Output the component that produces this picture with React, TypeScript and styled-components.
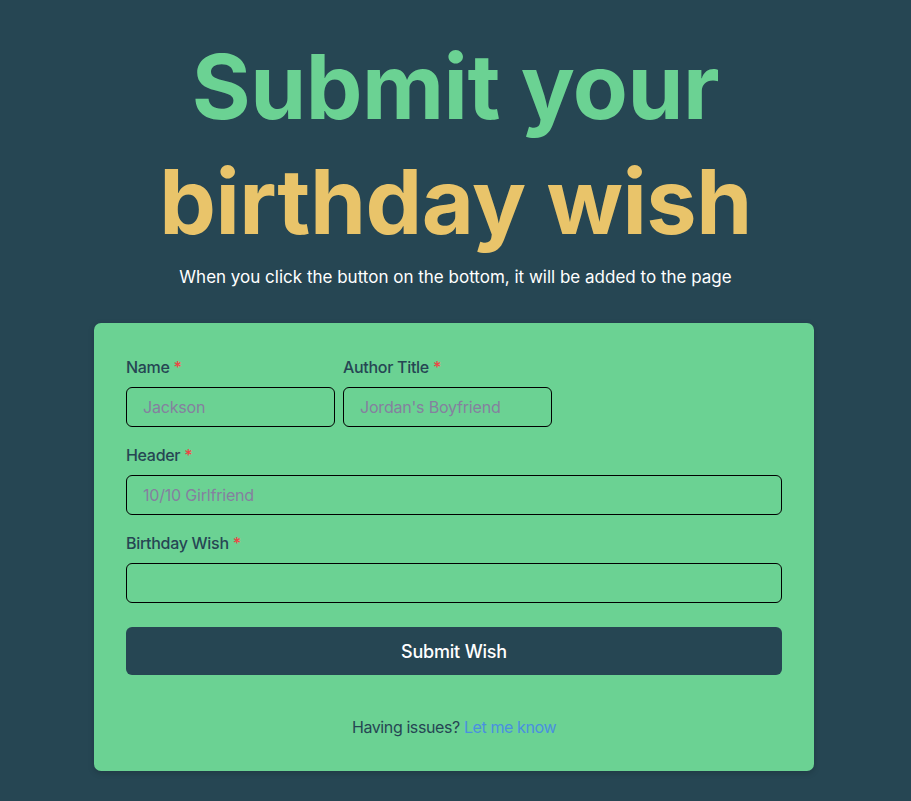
import React from "react";
import styled, { createGlobalStyle } from "styled-components";

const GlobalStyle = createGlobalStyle`
  html, body {
    margin: 0;
    padding: 0;
    background: #264653;
    font-family: Inter, "Noto Sans", sans-serif;
  }
  * { box-sizing: border-box; }
`;

const Page = styled.main`
  min-height: 801px;
  display: flex;
  flex-direction: column;
  align-items: center;
  padding-top: 29px;
`;

const Title = styled.h1`
  margin: 0;
  text-align: center;
  font-size: 90px;
  line-height: 115px;
  font-weight: 700;
  letter-spacing: -0.5px;
`;

const TitleLine = styled.span<{ $color: string }>`
  display: block;
  color: ${(p) => p.$color};
`;

const Subtitle = styled.p`
  margin: 4px 0 0;
  color: #ffffff;
  font-size: 17px;
  line-height: 28px;
  text-align: center;
`;

const Card = styled.form`
  margin-top: 32px;
  margin-right: 3px;
  width: 720px;
  background: #6bd293;
  border-radius: 7px;
  padding: 32px;
  box-shadow: 0 2px 6px rgba(0, 0, 0, 0.18);
  display: flex;
  flex-direction: column;
`;

const Row = styled.div`
  display: flex;
  gap: 8px;
  margin-bottom: 16px;
`;

const Field = styled.div<{ $width?: string }>`
  display: flex;
  flex-direction: column;
  gap: 8px;
  width: ${(p) => p.$width ?? "100%"};
`;

const Label = styled.label`
  color: #264653;
  font-size: 16px;
  line-height: 24px;
  font-weight: 500;
  letter-spacing: -0.3px;
`;

const Required = styled.span`
  color: #ef4444;
`;

const Input = styled.input`
  height: 40px;
  width: 100%;
  border: 1px solid #000;
  border-radius: 6px;
  background: transparent;
  padding: 0 16px;
  font-family: Inter, "Noto Sans", sans-serif;
  font-size: 16px;
  letter-spacing: -0.2px;
  color: #264653;
  outline: none;
  &::placeholder {
    color: #85809f;
  }
`;

const Button = styled.button`
  margin-top: 8px;
  height: 48px;
  width: 100%;
  border: none;
  border-radius: 6px;
  background: #264653;
  color: #fff;
  font-family: Inter, "Noto Sans", sans-serif;
  font-size: 18px;
  font-weight: 500;
  letter-spacing: -0.2px;
  cursor: pointer;
`;

const Footer = styled.p`
  margin: 40px 0 0;
  text-align: center;
  color: #264653;
  font-size: 16px;
  line-height: 24px;
  letter-spacing: -0.4px;
`;

const Link = styled.a`
  color: #4a8fe0;
  text-decoration: none;
`;

export default function App() {
  return (
    <>
      <GlobalStyle />
      <Page>
        <Title>
          <TitleLine $color="#6bd293">Submit your</TitleLine>
          <TitleLine $color="#e9c46a">birthday wish</TitleLine>
        </Title>
        <Subtitle>When you click the button on the bottom, it will be added to the page</Subtitle>
        <Card onSubmit={(e) => e.preventDefault()}>
          <Row>
            <Field $width="209px">
              <Label>
                Name <Required>*</Required>
              </Label>
              <Input placeholder="Jackson" />
            </Field>
            <Field $width="209px">
              <Label>
                Author Title <Required>*</Required>
              </Label>
              <Input placeholder="Jordan's Boyfriend" />
            </Field>
          </Row>
          <Row>
            <Field>
              <Label>
                Header <Required>*</Required>
              </Label>
              <Input placeholder="10/10 Girlfriend" />
            </Field>
          </Row>
          <Row>
            <Field>
              <Label>
                Birthday Wish <Required>*</Required>
              </Label>
              <Input />
            </Field>
          </Row>
          <Button type="submit">Submit Wish</Button>
          <Footer>
            Having issues? <Link href="#">Let me know</Link>
          </Footer>
        </Card>
      </Page>
    </>
  );
}
